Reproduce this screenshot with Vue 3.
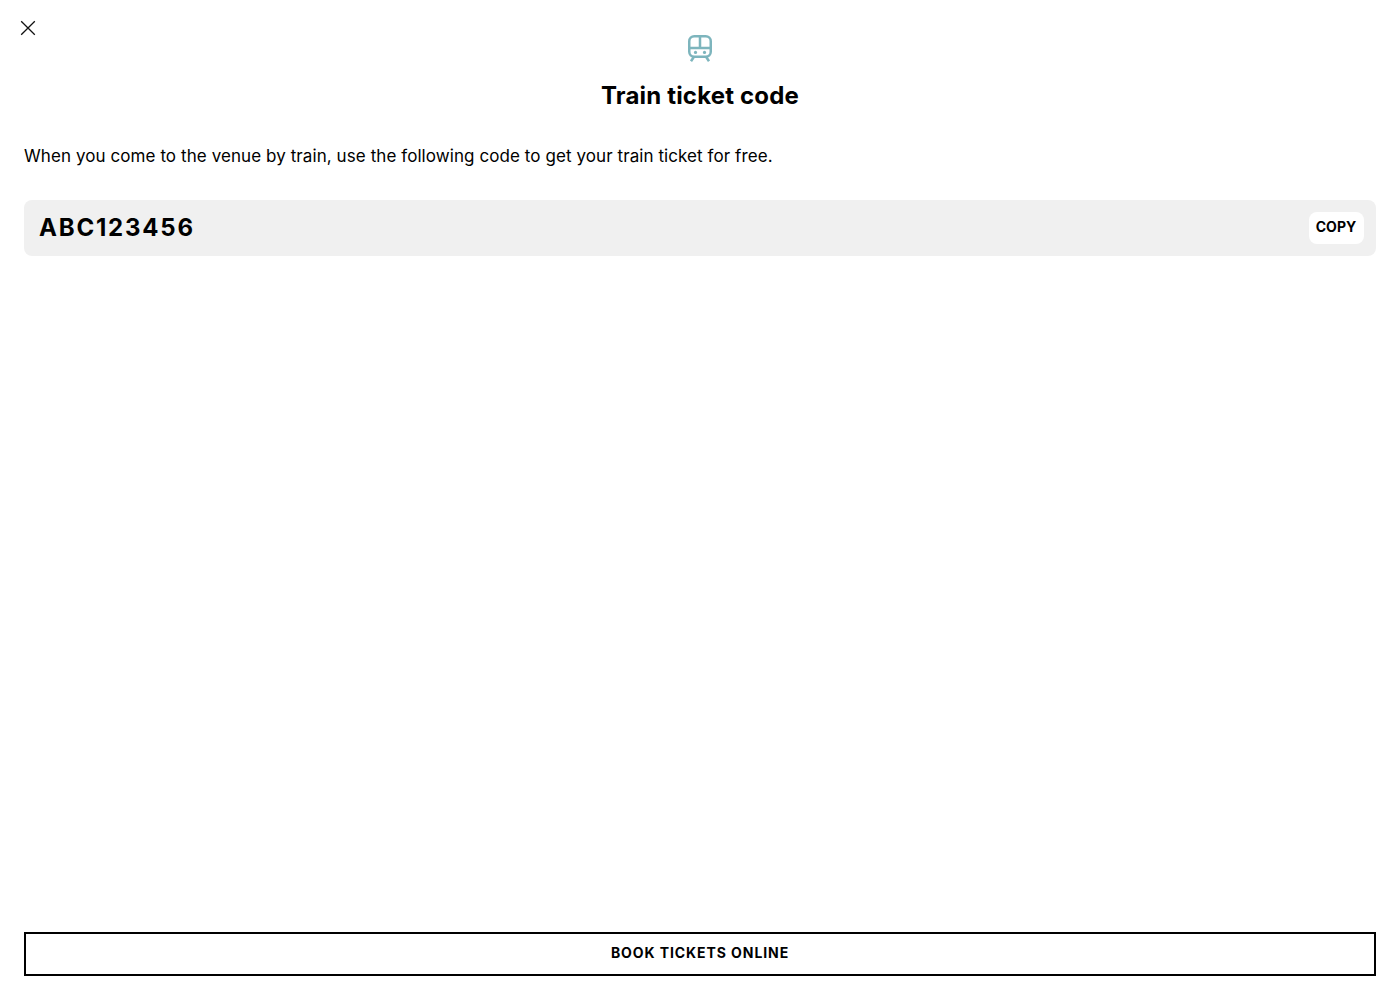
<script setup>
const code = 'ABC123456'
</script>

<template>
  <div class="page">
    <button class="close" aria-label="Close">
      <svg width="16" height="16" viewBox="0 0 16 16" fill="none" stroke="#111" stroke-width="1.3">
        <path d="M1.2 1.2 14.8 14.8M14.8 1.2 1.2 14.8" />
      </svg>
    </button>
    <header class="head">
      <svg class="train" width="24" height="27" viewBox="0 0 24 27" fill="none" stroke="#7db5bd" stroke-width="2.5">
        <rect x="1.25" y="1.25" width="21.5" height="20.5" rx="5" />
        <path d="M12 1V13M1 13H23" />
        <path d="M5.8 22 3 26.2M18.2 22l2.8 4.2" />
        <circle cx="7.5" cy="17.4" r="1.6" fill="#7db5bd" stroke="none" />
        <circle cx="16.5" cy="17.4" r="1.6" fill="#7db5bd" stroke="none" />
      </svg>
      <h1 class="title">Train ticket code</h1>
    </header>
    <p class="intro">When you come to the venue by train, use the following code to get your train ticket for free.</p>
    <div class="code-box">
      <span class="code">{{ code }}</span>
      <button class="copy">COPY</button>
    </div>
    <button class="book">BOOK TICKETS ONLINE</button>
  </div>
</template>

<style scoped>
.page {
  position: relative;
  box-sizing: border-box;
  height: 1000px;
  padding: 35px 24px 24px;
  display: flex;
  flex-direction: column;
  font-family: Inter, "Liberation Sans", sans-serif;
  color: #000;
  background: #fff;
}
.close {
  position: absolute;
  top: 20px;
  left: 20px;
  padding: 0;
  width: 16px;
  height: 16px;
  border: 0;
  background: none;
  display: block;
}
.close svg { display: block; }
.head {
  display: flex;
  flex-direction: column;
  align-items: center;
}
.train { display: block; }
.title {
  margin: 19px 0 0;
  font-size: 24px;
  line-height: 30px;
  font-weight: 700;
  letter-spacing: 0.18px;
}
.intro {
  margin: 33px 0 0;
  font-size: 17px;
  line-height: 24px;
  font-weight: 400;
  letter-spacing: 0.08px;
}
.code-box {
  margin-top: 32px;
  height: 56px;
  box-sizing: border-box;
  padding: 0 12px 0 15px;
  display: flex;
  align-items: center;
  justify-content: space-between;
  background: #f0f0f0;
  border-radius: 8px;
}
.code {
  font-size: 24px;
  line-height: 24px;
  padding-bottom: 1px;
  font-weight: 700;
  letter-spacing: 1.8px;
}
.copy {
  width: 55px;
  height: 32px;
  padding: 0 1px 3px 0;
  border: 0;
  border-radius: 8px;
  background: #fff;
  font: 700 14px Inter, "Liberation Sans", sans-serif;
  color: #000;
}
.book {
  margin-top: auto;
  height: 44px;
  padding: 0 0 3px;
  border: 2px solid #000;
  background: #fff;
  font: 700 14px Inter, "Liberation Sans", sans-serif;
  letter-spacing: 0.92px;
  color: #000;
}
</style>
